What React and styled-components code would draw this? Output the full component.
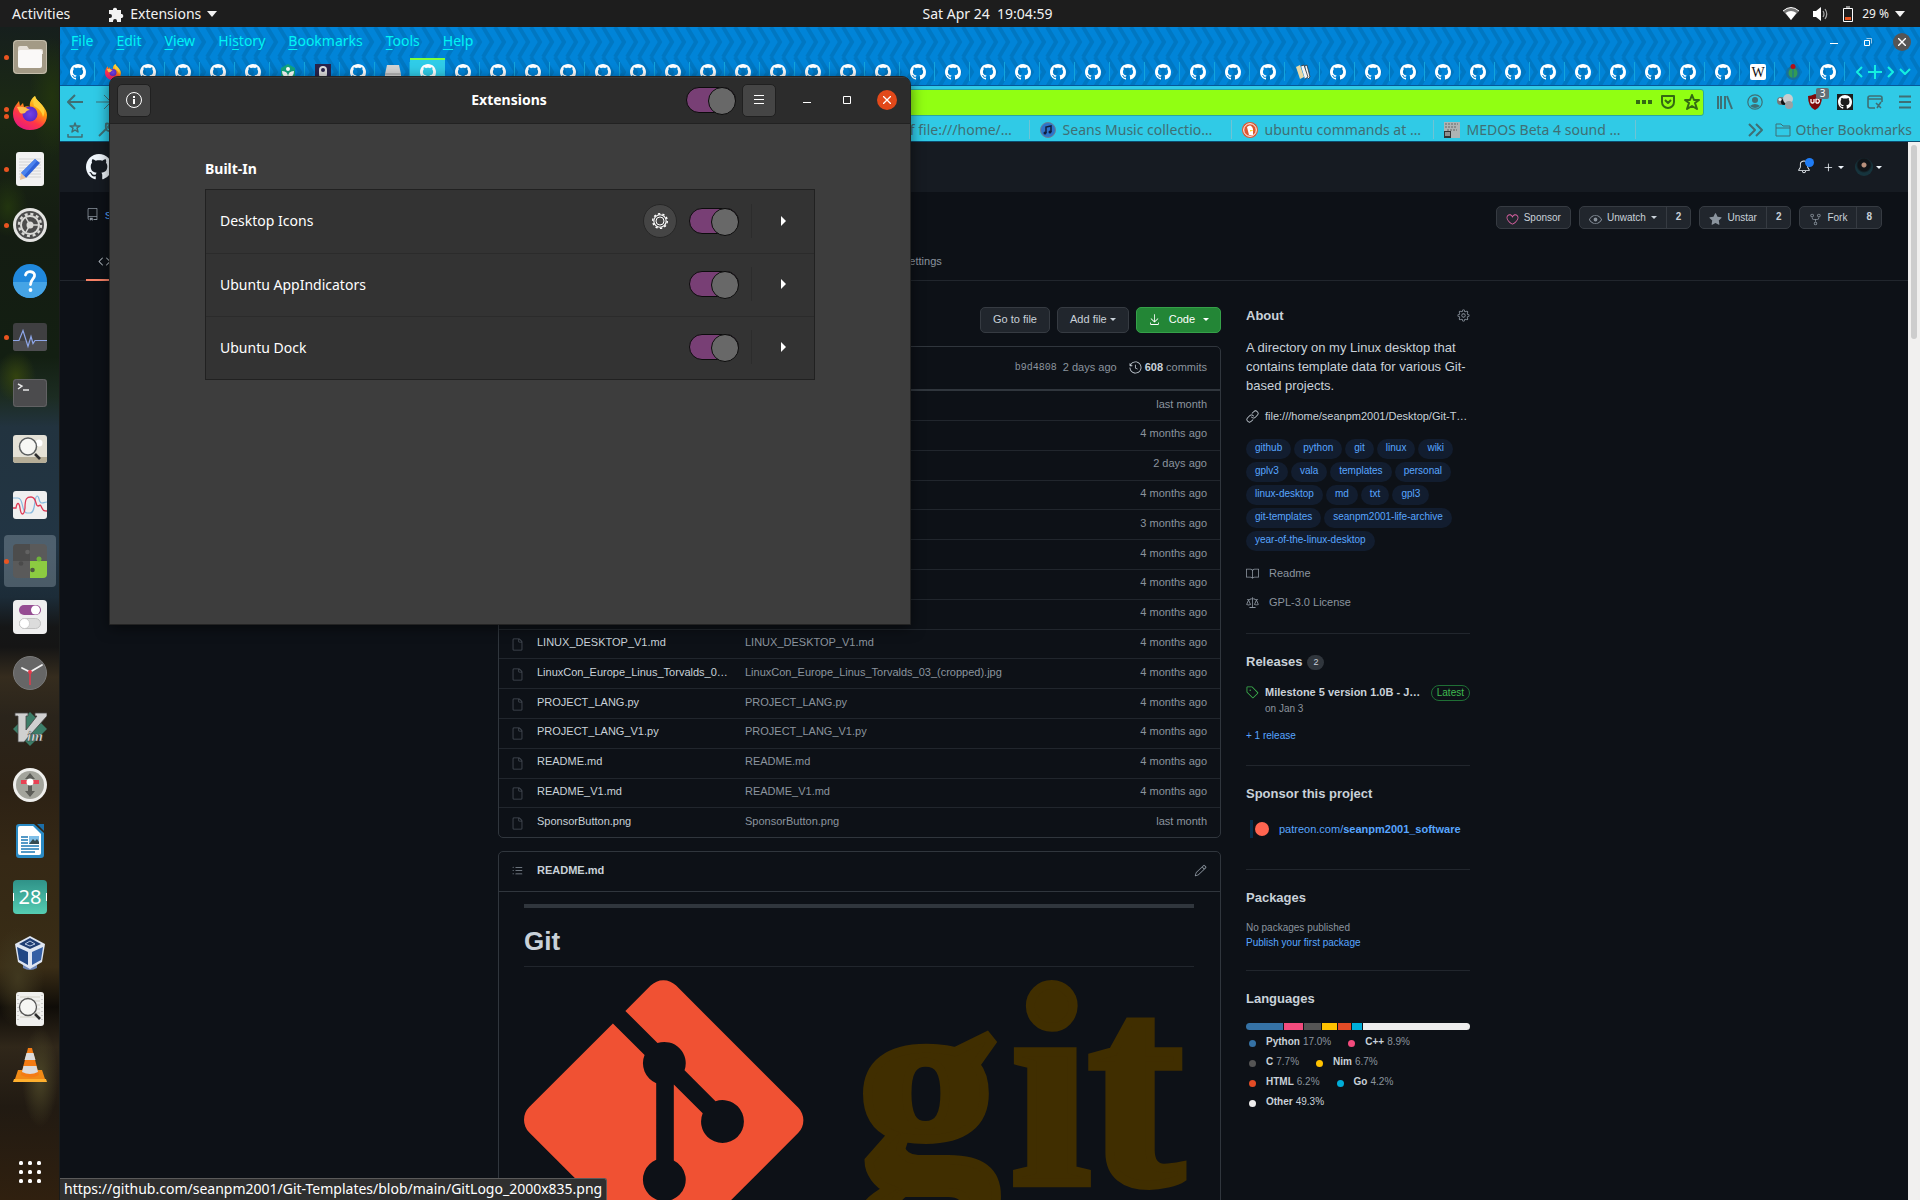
import React from "react";
import styled, { createGlobalStyle, css } from "styled-components";
import {
  GoBell, GoBook, GoCode, GoDownload, GoEye, GoFile, GoGear, GoHeart, GoHistory, GoLaw, GoLink,
  GoListUnordered, GoPencil, GoPlus, GoRepo, GoRepoForked, GoStarFill, GoTag,
} from "react-icons/go";

const shell = '"Noto Sans", "Open Sans", sans-serif';
const web = '"Liberation Sans", Arial, sans-serif';

const Global = createGlobalStyle`
  * { box-sizing: border-box; }
  html, body { margin: 0; height: 100%; }
  body { background: #0d1117; font-family: ${shell}; font-size: 14px; overflow: hidden; }
  a { color: inherit; text-decoration: none; }
  button { font: inherit; color: inherit; border: 0; background: none; padding: 0; cursor: pointer; }
  ul { list-style: none; margin: 0; padding: 0; }
  h1, h2, h3, p { margin: 0; }
  svg { display: block; flex: none; }
`;

const Desktop = styled.div`
  height: 100vh;
  display: flex;
  flex-direction: column;
  position: relative;
  overflow: hidden;
`;

/* ---------- top bar ---------- */
const TopBar = styled.header`
  flex: none;
  height: 27px;
  display: grid;
  grid-template-columns: 1fr auto 1fr;
  align-items: center;
  background: #1d1d1d;
  color: #f2f2f2;
  padding: 0 15px 0 12px;
`;
const BarGroup = styled.div`
  display: flex;
  align-items: center;
  justify-content: ${(p) => (p.$end ? "flex-end" : "flex-start")};
  gap: ${(p) => (p.$end ? "8px" : "38px")};
  & > svg + svg { margin-left: 6px; }
`;
const BarButton = styled.button`
  display: flex;
  align-items: center;
  gap: 6px;
  line-height: 24px;
`;
const Clock = styled.time`
  padding-left: 58px;
  white-space: pre;
  line-height: 24px;
`;
const Percent = styled.span`
  font-size: 12px;
`;
const Triangle = styled.i`
  border: 5px solid transparent;
  border-top: 6px solid currentColor;
  border-bottom: 0;
`;

const Main = styled.div`
  flex: 1;
  min-height: 0;
  display: flex;
`;

/* ---------- dock ---------- */
const DockBar = styled.nav`
  flex: none;
  width: 60px;
  display: flex;
  flex-direction: column;
  align-items: center;
  gap: 4px;
  padding: 4px 0 2px;
  border-right: 1px solid #1a1c1c;
  background:
    radial-gradient(ellipse 18px 50px at 40px 1050px, #4a4426 0, transparent 100%),
    radial-gradient(ellipse 26px 50px at 18px 950px, #40381f 0, transparent 100%),
    radial-gradient(ellipse 20px 26px at 16px 350px, #33430f 0, transparent 100%),
    radial-gradient(ellipse 20px 30px at 8px 180px, #22350f 0, transparent 100%),
    radial-gradient(ellipse 22px 60px at 52px 70px, #22340f 0, transparent 100%),
    linear-gradient(#161f1d 0, #1b2914 80px, #141c12 200px, #131f12 330px, #1c2c22 370px, #22333f 400px,
      #223544 520px, #1c2c38 570px, #151617 600px, #151515 620px, #352c1e 650px, #2a241b 690px, #2c2114 760px,
      #352815 830px, #362a15 880px, #3a2d16 940px, #0f0c08 980px, #30271a 1020px, #211a12 1080px, #30200f 1173px);
`;
const DockButton = styled.button`
  position: relative;
  width: 52px;
  height: 52px;
  flex: none;
  display: grid;
  place-items: center;
  border-radius: 4px;
  background: ${(p) => (p.$active ? "rgba(200,215,225,.27)" : "transparent")};
  margin-top: ${(p) => (p.$last ? "auto" : "0")};
`;
const Dots = styled.span`
  position: absolute;
  left: 0;
  top: 0;
  bottom: 0;
  display: flex;
  flex-direction: column;
  justify-content: center;
  gap: 2px;
`;
const Dot = styled.i`
  width: 5px;
  height: 5px;
  border-radius: 50%;
  background: #e95420;
`;

const Box = ({ children, s = 34 }) => <svg width={s} height={s} viewBox="0 0 34 34">{children}</svg>;

const Mark16 = ({ size = 16, ...rest }) => (
  <svg width={size} height={size} viewBox="0 0 16 16" fill="currentColor" {...rest}>
    <path d="M8 0C3.58 0 0 3.58 0 8c0 3.54 2.29 6.53 5.47 7.59.4.07.55-.17.55-.38 0-.19-.01-.82-.01-1.49-2.01.37-2.53-.49-2.69-.94-.09-.23-.48-.94-.82-1.13-.28-.15-.68-.52-.01-.53.63-.01 1.08.58 1.23.82.72 1.21 1.87.87 2.33.66.07-.52.28-.87.51-1.07-1.78-.2-3.64-.89-3.64-3.95 0-.87.31-1.59.82-2.15-.08-.2-.36-1.02.08-2.12 0 0 .67-.21 2.2.82.64-.18 1.32-.27 2-.27.68 0 1.36.09 2 .27 1.53-1.04 2.2-.82 2.2-.82.44 1.1.16 1.92.08 2.12.51.56.82 1.27.82 2.15 0 3.07-1.87 3.75-3.65 3.95.29.25.54.73.54 1.48 0 1.07-.01 1.93-.01 2.2 0 .21.15.46.55.38A8.013 8.013 0 0016 8c0-4.42-3.58-8-8-8z" />
  </svg>
);

const FirefoxArt = ({ s = 34 }) => (
  <svg width={s} height={s} viewBox="0 0 34 34">
    <defs>
      <linearGradient id="ffa" x1="0.8" y1="0" x2="0.2" y2="1">
        <stop offset="0" stopColor="#fff44f" /><stop offset=".35" stopColor="#ff980e" />
        <stop offset=".65" stopColor="#ff3647" /><stop offset="1" stopColor="#e31587" />
      </linearGradient>
      <radialGradient id="ffb"><stop offset="0" stopColor="#7542e5" /><stop offset="1" stopColor="#592acb" /></radialGradient>
    </defs>
    <path fill="url(#ffa)" d="M6 5l1 5 3-3 1 4c2-1 4-1 6 0-1-5 2-9 5-11 1 4 4 5 7 9 3 3 5 7 5 10 0 9-7 15-17 15S0 27 0 18C0 12 3 9 6 5z" />
    <circle cx="17" cy="18" r="7.5" fill="url(#ffb)" />
    <path fill="#ffbd4f" d="M4 11c4-1 9 0 13 3-2 0-4 1-5 3-3 1-5 1-6-2z" />
    <path fill="#ffcf3a" d="M22 0c1 4 4 5 7 9 3 4 3 8 1 12-1-6-5-9-9-11-1-3-1-7 1-10z" />
  </svg>
);

const dockItems = [
  { name: "Files", dots: 1, art: <Box><rect width="34" height="34" rx="4" fill="#a39a86" /><rect x=".5" y=".5" width="33" height="33" rx="4" fill="none" stroke="#c4bdac" /><path d="M5 8q0-2 2-2h7l2 3h12q2 0 2 2v3H5z" fill="#e6e0d8" /><rect x="5" y="10" width="24" height="18" rx="2" fill="#faf9f8" /></Box> },
  { name: "Firefox", dots: 2, art: <FirefoxArt /> },
  { name: "Text Editor", dots: 1, art: <Box><rect x="3" width="28" height="34" rx="3" fill="#f2f2f2" /><path d="M6 7h22M6 10h22M6 13h22M6 16h22M6 19h22M6 22h22M6 25h22" stroke="#d4d4d4" /><path d="M22 7l5 4-14 15-5-5z" fill="#2f62d8" /><path d="M22 7l2 2-13 15-3-3z" fill="#4c83ee" /><path d="M8 21l5 5-6 2z" fill="#e8c19a" /></Box> },
  { name: "Settings", dots: 1, art: <Box><circle cx="17" cy="17" r="17" fill="#e4e4e2" /><circle cx="17" cy="17" r="14" fill="#4c4c4c" /><circle cx="17" cy="17" r="9" fill="none" stroke="#d9d9d6" strokeWidth="2" /><circle cx="17" cy="17" r="11" fill="none" stroke="#d9d9d6" strokeWidth="2.4" strokeDasharray="3 2.76" /><circle cx="17" cy="17" r="3.5" fill="#d9d9d6" /><path d="M17 17h8M17 17l-4-7M17 17l-4 7" stroke="#d9d9d6" strokeWidth="1.5" /></Box> },
  { name: "Help", art: <Box><circle cx="17" cy="17" r="17" fill="#2088dc" /><path d="M0 18a17 16 0 0 0 34 0z" fill="#45a4e6" /><path d="M12.5 11c1-5 10-4 9 1-.5 3-4 4-4 8.5" fill="none" stroke="#fff" strokeWidth="2.8" strokeLinecap="round" /><circle cx="17.5" cy="26" r="1.9" fill="#fff" /></Box> },
  { name: "System Monitor", dots: 1, art: <Box><rect y="3" width="34" height="28" rx="3" fill="#3f3f41" /><path d="M0 21h34v7q0 3-3 3H3q-3 0-3-3z" fill="#4d4d50" /><path d="M0 20.5h6l4-10 5 16 3-10 2 7 2-3h12" fill="none" stroke="#8ea6e8" strokeWidth="1.2" /></Box> },
  { name: "Terminal", art: <Box><rect y="3" width="34" height="28" rx="3" fill="#4b4b4d" /><rect x=".5" y="3.5" width="33" height="27" rx="3" fill="none" stroke="#626264" /><path d="M5 8l4 2-4 3M10 14h6" fill="none" stroke="#e8e8e8" strokeWidth="1.4" /></Box> },
  { name: "Image Viewer", art: <Box><rect y="3" width="34" height="28" rx="3" fill="#e4e1d6" /><path d="M0 25h34v3q0 3-3 3H3q-3 0-3-3z" fill="#b5ad97" /><circle cx="26" cy="11" r="3.5" fill="#fff" /><circle cx="15" cy="14.500" r="8.5" fill="#f7f7f4" stroke="#5c5f60" strokeWidth="1.5" /><path d="M22 22l5 5" stroke="#2d2d2d" strokeWidth="2.6" /></Box> },
  { name: "Power Statistics", art: <Box><rect y="3" width="34" height="28" rx="3" fill="#efefef" /><path d="M0 10h5c6 0 3 15 9 15h3c6 0 4-17 7-17 3 0 1 7 5 7 2 0 2-1 5-1" fill="none" stroke="#87b9de" strokeWidth="1.2" /><path d="M0 20h3c1-6 3-6 4 0 1 8 4 8 5 0 0-10 2-11 6-11 6 0 4 9 7 9 2 0 2-2 3 0 2 5 3 5 6 5" fill="none" stroke="#dd3a55" strokeWidth="1.3" /></Box> },
  { name: "Extensions", dots: 1, active: true, art: <Box><rect width="34" height="34" rx="4" fill="#5a5a5a" /><path d="M0 17V4q0-4 4-4h13v17z" fill="#4c4c4c" /><path d="M17 17h17v13q0 4-4 4H17z" fill="#8ccb41" /><circle cx="26" cy="15" r="2.5" fill="#6fb33b" /><circle cx="14.5" cy="8" r="2.3" fill="#626262" /><circle cx="8" cy="19.5" r="2.3" fill="#4a4a4a" /><circle cx="19.5" cy="26" r="2.3" fill="#4d5a40" /></Box> },
  { name: "Tweaks", art: <Box><rect width="34" height="34" rx="4" fill="#efefef" /><rect x="6" y="5" width="22" height="10" rx="5" fill="#954c92" /><circle cx="22.5" cy="10" r="4.5" fill="#fff" /><rect x="6.5" y="18.5" width="21" height="10" rx="5" fill="#dcdcdc" stroke="#c2c2c2" /><circle cx="11.5" cy="23.5" r="5" fill="#fff" stroke="#bbb" strokeWidth=".6" /></Box> },
  { name: "Clocks", art: <Box><circle cx="17" cy="17" r="16.5" fill="#666" stroke="#7a7a7a" /><path d="M17 16L9 12M17 16l12-7" stroke="#f2f2f2" strokeWidth="1.8" strokeLinecap="round" /><path d="M17 14v15" stroke="#e33b4c" strokeWidth="1.5" /><circle cx="17" cy="16" r="2" fill="#e33b4c" /></Box> },
  { name: "Vim", art: <Box><path d="M17 0l17 17-17 17L0 17z" fill="#3c7d68" /><path d="M2 1h13v3h-2v14L24 4h-2V1h12v3L11 30H5V4H2z" fill="#d0d0d0" stroke="#444" strokeWidth=".8" /><text x="14" y="29" fontFamily="Liberation Serif" fontSize="15" fontStyle="italic" fontWeight="700" fill="#e2e2e2" stroke="#333" strokeWidth=".4">im</text></Box> },
  { name: "Startup Disk", art: <Box><circle cx="17" cy="17" r="17" fill="#efefed" /><circle cx="17" cy="17" r="14" fill="#a3a49c" /><path d="M17 5l5 6h-3v12h3l-5 6-5-6h3V11h-3z" fill="#5c5d58" /><rect x="8" y="12" width="18" height="4" fill="#e84154" /><circle cx="17" cy="14" r="3.5" fill="#fff" /></Box> },
  { name: "Writer", art: <Box><path d="M6 0h15l10 9v22q0 3-3 3H6q-3 0-3-3V3q0-3 3-3z" fill="#2a8ac4" /><path d="M7 2h13l8 8v19q0 2-2 2H7q-2 0-2-2V4q0-2 2-2z" fill="#fff" /><path d="M24 0h7v7z" fill="#1b6ea8" /><path d="M8 13h7M8 16h7M8 19h7M8 22h18M8 25h18M8 28h14" stroke="#1d78b4" strokeWidth="1.5" /><rect x="16" y="12" width="10" height="8" fill="#7fbfe8" /><path d="M16 20l4-5 2 2 2-2 2 3v2z" fill="#364b52" /></Box> },
  { name: "Calendar", art: <Box><defs><linearGradient id="cal" x2="0" y2="1"><stop offset="0" stopColor="#2f9288" /><stop offset="1" stopColor="#55cdb2" /></linearGradient></defs><rect width="34" height="34" rx="4" fill="url(#cal)" /><text x="17" y="24" textAnchor="middle" fontFamily="Noto Sans" fontSize="20" fill="#fff">28</text><path d="M.5 13v8M33.5 13v8" stroke="#fff" /></Box> },
  { name: "VirtualBox", art: <Box><path d="M10 28l7 3 7-3v4q-7 4-14 0z" fill="#6e87b8" /><path d="M17 0l15 8-3 18-12 7L5 26 2 8z" fill="#dfe6f2" /><path d="M17 2l11 6-11 5L6 8z" fill="#1f3d73" /><path d="M4 11l11 5v13l-9-5z" fill="#214784" /><path d="M30 11l-11 5v13l9-5z" fill="#345fa5" /><path d="M12 8l5-3 5 3-5 2z" fill="none" stroke="#b9c8e2" /></Box> },
  { name: "Log Viewer", art: <Box><rect x="3" width="28" height="34" rx="3" fill="#f0f0ee" /><path d="M7 5h20M7 9h20M7 13h20M7 17h20M7 21h20M7 25h20" stroke="#d2d0c6" /><path d="M5 3v28M29 3v28" stroke="#aaa" strokeDasharray="1 3" /><circle cx="15" cy="15" r="8.5" fill="#f6f6f3" stroke="#555" strokeWidth="1.3" /><path d="M22 22l5 5" stroke="#2d2d2d" strokeWidth="2.6" /></Box> },
  { name: "VLC", art: <Box><path d="M5 22h24l4 12H1z" fill="#f08a16" /><path d="M15 0h4l7 27q-9 5-18 0z" fill="#f47c14" /><path d="M13.5 5h7l2 7h-11zM10.500 18h13l1.5 6q-8 4-16 0z" fill="#dcdcdc" /><path d="M1 31h32l1 3H0z" fill="#ffb02e" /></Box> },
];

function Dock() {
  return (
    <DockBar aria-label="Dock">
      {dockItems.map((d) => (
        <DockButton key={d.name} aria-label={d.name} $active={d.active}>
          {d.art}
          {d.dots && <Dots>{Array.from({ length: d.dots }, (_, i) => <Dot key={i} />)}</Dots>}
        </DockButton>
      ))}
      <DockButton aria-label="Show applications" $last>
        <svg width="24" height="24" viewBox="0 0 24 24" fill="#fff">
          {[1, 10, 19].flatMap((y) => [1, 10, 19].map((x) => <rect key={x + "-" + y} x={x} y={y} width="4" height="4" rx="1.5" />))}
        </svg>
      </DockButton>
    </DockBar>
  );
}

/* ---------- browser chrome ---------- */
const Browser = styled.section`
  flex: 1;
  min-width: 0;
  display: flex;
  flex-direction: column;
  position: relative;
`;
const chevrons =
  "url(\"data:image/svg+xml,%3Csvg xmlns='http://www.w3.org/2000/svg' width='12' height='30'%3E%3Cpath d='M-9 0L0 15L-9 30M3 0L12 15L3 30M15 0L24 15L15 30' fill='none' stroke='%230077c2' stroke-width='4'/%3E%3C/svg%3E\")";
const Strip = styled.div`
  flex: none;
  background: #0084d8 ${chevrons};
  border-bottom: 1px solid #05579a;
`;
const MenuRow = styled.div`
  height: 31px;
  display: flex;
  align-items: center;
  padding: 0 9px 2px 11px;
`;
const MenuItems = styled.nav`
  flex: 1;
  display: flex;
  gap: 23px;
  padding-bottom: 2px;
  color: #00f4f4;
  button { line-height: 20px; }
  u { text-underline-offset: 3px; }
`;
const WindowButton = styled.button`
  width: 34px;
  height: 20px;
  display: grid;
  place-items: center;
  &:last-child { width: 18px; height: 18px; margin-left: 8px; border-radius: 50%; background: #555; }
`;
const TabRow = styled.div`
  height: 27px;
  display: flex;
`;
const TabButton = styled.button`
  width: 35px;
  flex: none;
  display: grid;
  place-items: center;
  color: #fff;
  position: relative;
  ${(p) => p.$active
    ? css`background: #30cce8; box-shadow: inset 0 2px #7dff3c;`
    : css`&::after { content: ""; position: absolute; right: 0; top: 4px; height: 19px; width: 1px; background: #12a4dc; }`}
`;
const TabTools = styled.div`
  flex: 1;
  display: flex;
  align-items: center;
  justify-content: space-between;
  padding: 0 9px 0 11px;
  color: #14efe0;
`;
const ToolArea = styled.div`
  flex: none;
  background: #30cae6;
  color: #3f6f74;
  border-bottom: 1px solid #0b4c70;
`;
const NavRow = styled.div`
  height: 32px;
  display: flex;
  align-items: center;
  padding-left: 7px;
`;
const NavIcons = styled.div`
  display: flex;
  gap: 13px;
  padding-right: 25px;
`;
const UrlBox = styled.div`
  flex: 1;
  height: 27px;
  margin-right: 6px;
  display: flex;
  align-items: center;
  gap: 8px;
  padding: 0 3px;
  background: #91ff12;
  border: 1px solid #2aa7a0;
  border-radius: 3px;
  color: #336a12;
`;
const UrlInput = styled.input`
  flex: 1;
  min-width: 0;
  border: 0;
  outline: 0;
  background: none;
  font: inherit;
`;
const ToolButton = styled.button`
  width: 30px;
  height: 28px;
  display: grid;
  place-items: center;
  position: relative;
`;
const Badge = styled.span`
  position: absolute;
  right: 1px;
  top: 0;
  width: 13px;
  background: #636f76;
  color: #fff;
  font-size: 10px;
  line-height: 11px;
  border-radius: 2px;
`;
const MarkRow = styled.div`
  height: 23px;
  display: flex;
  align-items: center;
  padding: 0 8px 0 7px;
`;
const Marks = styled.ul`
  flex: 1;
  display: flex;
  justify-content: flex-end;
  padding-right: 112px;
`;
const Mark = styled.li`
  width: 202px;
  flex: none;
  padding-left: 10px;
  border-right: 1px solid #6fc3d4;
  a { display: flex; align-items: center; gap: 7px; line-height: 19px; white-space: nowrap; }
`;
const OtherMarks = styled.button`
  display: flex;
  align-items: center;
  gap: 5px;
  margin-left: 11px;
  line-height: 19px;
`;

const Line = ({ d, w = 16, h = 16, sw = 2, fill = "none" }) => (
  <svg width={w} height={h} viewBox={`0 0 ${w} ${h}`} fill={fill} stroke="currentColor" strokeWidth={sw} strokeLinejoin="round"><path d={d} /></svg>
);
const WordW = () => (
  <svg width="16" height="16" viewBox="0 0 16 16"><rect width="16" height="16" rx="2" fill="#fff" /><text x="8" y="13" textAnchor="middle" fontFamily="Liberation Serif" fontSize="14" fill="#111">W</text></svg>
);
const specialTabs = {
  1: <FirefoxArt s={16} />,
  6: <svg width="16" height="16" viewBox="0 0 16 16"><path d="M8 0l7 4v8l-7 4-7-4V4z" fill="#12a37d" /><circle cx="8" cy="5" r="2" fill="#fff" /><path d="M2 7q6 0 6 6 0-6 6-6 0 6-6 7-6-1-6-7z" fill="#fff" /></svg>,
  7: <svg width="16" height="16" viewBox="0 0 16 16"><rect width="16" height="16" fill="#29234b" /><rect x="4" y="2" width="8" height="12" rx="4" fill="#ddd" /><circle cx="8" cy="6" r="2" fill="#29234b" /></svg>,
  9: <svg width="16" height="16" viewBox="0 0 16 16"><path d="M2 1h12l2 9v6H0v-6z" fill="#d4d4d4" /><path d="M0 10h16" stroke="#999" /></svg>,
  35: <svg width="16" height="16" viewBox="0 0 16 16"><path d="M1 3l4-2 4 12-4 2z" fill="#e8d9a6" /><path d="M6 2l3-1 4 12-3 2M10 2l2-1 3 12-2 2" fill="#f4f4f4" stroke="#333" strokeWidth=".8" /></svg>,
  48: <WordW />,
  49: <svg width="16" height="16" viewBox="0 0 16 16"><circle cx="8" cy="9" r="7" fill="#176f9c" /><ellipse cx="8" cy="9" rx="4.5" ry="5" fill="#339a55" /><path d="M8 5v9" stroke="#176f9c" /><circle cx="8" cy="2.5" r="2.5" fill="#b01018" /></svg>,
};
const markItems = [
  ["Index of file:///home/…", <Line w={16} d="M2 1h8l4 4v10H2z" sw={1.4} />],
  ["Seans Music collectio…", <svg width="16" height="16" viewBox="0 0 16 16"><circle cx="8" cy="8" r="7.5" fill="#2d73c9" stroke="#6a7e93" /><path d="M6 11V5l5-1v6" fill="none" stroke="#111c3a" strokeWidth="1.5" /><circle cx="5" cy="11" r="1.5" fill="#111c3a" /><circle cx="10" cy="10" r="1.5" fill="#111c3a" /></svg>],
  ["ubuntu commands at …", <svg width="16" height="16" viewBox="0 0 16 16"><circle cx="8" cy="8" r="8" fill="#de5833" /><circle cx="8" cy="8" r="6.3" fill="none" stroke="#fff" /><path d="M5 5q4-4 6 2v6H7z" fill="#fff" /><path d="M8 8l4 .5-4 1z" fill="#fdd20a" /></svg>],
  ["MEDOS Beta 4 sound …", <svg width="16" height="16" viewBox="0 0 16 16"><rect width="16" height="16" fill="#aeb4b4" /><path d="M1 2h13M1 5h11M3 8h10" stroke="#666" strokeDasharray="2 1" /><rect y="9" width="7" height="7" fill="#333" /><path d="M1 11h5M1 13h5" stroke="#eee" /></svg>],
];

function Chrome() {
  return (
    <>
      <Strip>
        <MenuRow>
          <MenuItems>
            <button><u>F</u>ile</button><button><u>E</u>dit</button><button><u>V</u>iew</button>
            <button>Hi<u>s</u>tory</button><button><u>B</u>ookmarks</button><button><u>T</u>ools</button><button><u>H</u>elp</button>
          </MenuItems>
          <WindowButton aria-label="Minimize"><svg width="8" height="8"><path d="M0 5.5h8" stroke="#fff" /></svg></WindowButton>
          <WindowButton aria-label="Restore"><svg width="8" height="8" fill="none" stroke="#fff"><path d="M.5 2.5h5v5h-5z" /><path d="M2.5.5h5v5" opacity=".6" /></svg></WindowButton>
          <WindowButton aria-label="Close"><svg width="8" height="8" stroke="#fff" strokeWidth="1.4"><path d="M0 0l8 8M8 0L0 8" /></svg></WindowButton>
        </MenuRow>
        <TabRow>
          {Array.from({ length: 51 }, (_, i) => (
            <TabButton key={i} aria-label={`Tab ${i + 1}`} $active={i === 10}>{specialTabs[i] || <Mark16 />}</TabButton>
          ))}
          <TabTools>
            <button aria-label="Scroll tabs left"><Line d="M6 1L1 6l5 5" w={7} h={12} /></button>
            <button aria-label="New tab"><Line d="M7 0v14M0 7h14" w={14} h={14} /></button>
            <button aria-label="Scroll tabs right"><Line d="M1 1l5 5-5 5" w={7} h={12} /></button>
            <button aria-label="List all tabs"><Line d="M1 1l5 5 5-5" w={12} h={7} /></button>
          </TabTools>
        </TabRow>
      </Strip>
      <ToolArea>
        <NavRow>
          <NavIcons>
            <button aria-label="Back"><Line d="M16 8H1M8 1L1 8l7 7" /></button>
            <button aria-label="Forward"><Line d="M0 8h15M8 1l7 7-7 7" sw={1} /></button>
          </NavIcons>
          <UrlBox>
            <UrlInput aria-label="Address" />
            <Line d="M0 8h4M6 8h4M12 8h4" sw={4} />
            <Line d="M2 2h12v6a6 6 0 0 1-12 0zM5 6l3 3 3-3" />
            <Line d="M8 1l2 5h5l-4 3 2 6-5-3-5 3 2-6-4-3h5z" />
          </UrlBox>
          <ToolButton aria-label="Library"><Line d="M1 2v13M4 2v13M8 2v13M10 2l5 13" /></ToolButton>
          <ToolButton aria-label="Account"><svg width="16" height="16" viewBox="0 0 16 16"><circle cx="8" cy="8" r="7.2" fill="none" stroke="currentColor" strokeWidth="1.2" /><circle cx="8" cy="6" r="3" fill="currentColor" /><path d="M3 12q5-4 10 0-5 4-10 0z" fill="currentColor" /></svg></ToolButton>
          <ToolButton aria-label="Molecule"><svg width="16" height="16" viewBox="0 0 16 16"><circle cx="4" cy="7" r="4" fill="#777" /><circle cx="7" cy="8" r="3" fill="#111" /><circle cx="11" cy="5" r="5" fill="#c9ced0" /><circle cx="12" cy="11" r="4" fill="#9aa0a3" /><circle cx="3" cy="5.5" r="1.5" fill="#eee" /></svg></ToolButton>
          <ToolButton aria-label="Content blocker"><svg width="16" height="18" viewBox="0 0 16 18"><path d="M8 1q4 2 7 2 0 11-7 14Q1 14 1 3q3 0 7-2z" fill="#800a0a" /><path d="M4 6v3q0 1 1.5 1T7 9V6M9 6.5v3a2 2 0 1 0 .1-3z" fill="none" stroke="#fff" strokeWidth="1.3" /></svg><Badge>3</Badge></ToolButton>
          <ToolButton aria-label="GitHub"><svg width="16" height="16" viewBox="0 0 16 16"><rect width="16" height="16" fill="#1c1c1c" /><Mark16 x="1" y="1" size={14} color="#fff" /></svg></ToolButton>
          <ToolButton aria-label="Page tools"><Line d="M15 8V4q0-2-2-2H3Q1 2 1 4v8q0 2 2 2h5M1 5h14M9 9l5 5M14 8l-4 6" sw={1.6} /></ToolButton>
          <ToolButton aria-label="Menu"><Line d="M2 2.5h12M2 8h12M2 13.5h12" /></ToolButton>
        </NavRow>
        <MarkRow>
          <NavIcons>
            <Line d="M8 1l1 3h4l-3 2 1 4-3-2-3 2 1-4-3-2h4zM1 12v3h14v-3" w={17} sw={1.5} />
            <Line d="M2 14l8-8M9 2q0-1 4 0l-2 3 2 2 2-3q1 5-3 5-4 0-3-7z" sw={1.8} />
          </NavIcons>
          <Marks>
            {markItems.map(([label, icon]) => (
              <Mark key={label}><a href="#bookmark">{icon}<span>{label}</span></a></Mark>
            ))}
          </Marks>
          <button aria-label="More bookmarks"><Line d="M1 2l6 6-6 6M8 2l6 6-6 6" /></button>
          <OtherMarks><Line d="M1 4V2h5l2 2h7v10H1zM1 6h14" sw={1} />Other Bookmarks</OtherMarks>
        </MarkRow>
      </ToolArea>
    </>
  );
}

/* ---------- GitHub page ---------- */
const Viewport = styled.div`
  flex: 1;
  min-height: 0;
  display: flex;
  font-family: ${web};
  font-size: 11px;
  line-height: 17px;
  color: #c9d1d9;
`;
const Page = styled.div`
  flex: 1;
  min-width: 0;
  overflow: hidden;
  background: #0d1117;
`;
const ScrollTrack = styled.div`
  flex: none;
  width: 12px;
  padding: 3px;
  background: #f1f0ef;
`;
const ScrollThumb = styled.div`
  height: 194px;
  border-radius: 3px;
  background: #cdcdcd;
`;
const SiteHeader = styled.header`
  height: 50px;
  display: flex;
  align-items: center;
  gap: 11px;
  padding: 0 26px;
  background: #161b22;
  color: #f0f6fc;
`;
const Grow = styled.span`
  flex: 1;
`;
const HeaderButton = styled.button`
  display: flex;
  align-items: center;
  gap: 3px;
  position: relative;
`;
const Unread = styled.i`
  position: absolute;
  right: -3px;
  top: -2px;
  width: 9px;
  height: 9px;
  border-radius: 50%;
  background: #1f7cf5;
`;
const Caret = styled.i`
  border: 3px solid transparent;
  border-top: 3px solid currentColor;
  border-bottom: 0;
`;
const Avatar = styled.span`
  width: 18px;
  height: 18px;
  border-radius: 50%;
  background: radial-gradient(circle at 9px 7px, #b9907c 0 2px, #101418 3px 6px, #16343d 8px);
`;
const RepoBar = styled.div`
  display: flex;
  align-items: flex-start;
  gap: 8px;
  padding: 14px 26px 0;
  height: 54px;
`;
const RepoName = styled.a`
  display: flex;
  align-items: center;
  gap: 6px;
  flex: 1;
  font-size: 13px;
  color: #58a6ff;
  svg { color: #8b949e; }
`;
const Split = styled.div`
  display: flex;
  height: 23px;
  border: 1px solid #363b42;
  border-radius: 5px;
  background: #21262d;
  font-size: 10px;
  line-height: 19px;
  button { display: flex; align-items: center; gap: 5px; padding: 0 9px; }
  button svg { color: ${(p) => (p.$pink ? "#db61a2" : "#8b949e")}; margin-top: 3px; }
  a { padding: 0 9px; font-weight: 700; border-left: 1px solid #363b42; }
`;
const RepoTabs = styled.nav`
  height: 35px;
  display: flex;
  gap: 736px;
  padding: 0 26px;
  border-bottom: 1px solid #21262d;
`;
const RepoTab = styled.a`
  display: flex;
  align-items: center;
  gap: 7px;
  height: 35px;
  padding: 0 0 3px ${(p) => (p.$on ? "12px" : "0")};
  width: ${(p) => (p.$on ? "80px" : "auto")};
  color: ${(p) => (p.$on ? "#c9d1d9" : "#8b949e")};
  border-bottom: 2px solid ${(p) => (p.$on ? "#f78166" : "transparent")};
`;
const Columns = styled.div`
  display: grid;
  grid-template-columns: minmax(0, 1fr) 224px;
  gap: 25px;
  max-width: 972px;
  margin: 26px auto 0;
`;
const Actions = styled.div`
  display: flex;
  justify-content: flex-end;
  gap: 7px;
  margin-bottom: 13px;
`;
const ActionButton = styled.button`
  display: flex;
  align-items: center;
  gap: ${(p) => (p.$green ? "8px" : "3px")};
  height: 26px;
  padding: 0 ${(p) => (p.$green ? "11px" : "12px")} 2px;
  border-radius: 5px;
  border: 1px solid ${(p) => (p.$green ? "#35a149" : "#363b42")};
  background: ${(p) => (p.$green ? "#238636" : "#21262d")};
  color: ${(p) => (p.$green ? "#fff" : "#c9d1d9")};
`;
const Panel = styled.section`
  border: 1px solid #30363d;
  border-radius: 5px;
  margin-bottom: 13px;
`;
const PanelHead = styled.div`
  display: flex;
  align-items: center;
  gap: 6px;
  height: ${(p) => (p.$commits ? "42px" : "40px")};
  padding: 0 13px 2px 12px;
  color: #8b949e;
  border-bottom: ${(p) => (p.$commits ? 0 : "1px")} solid #30363d;
  b, h2 { color: #c9d1d9; font-size: 11px; }
`;
const PanelTitle = styled.h2`
  flex: 1;
  padding-left: 7px;
`;
const Hash = styled.a`
  font-family: "Liberation Mono", monospace;
  font-size: 10px;
`;
const CommitCount = styled.a`
  display: flex;
  align-items: center;
  gap: 3px;
  padding-left: 6px;
  svg { color: #c9d1d9; }
`;
const Files = styled.table`
  width: 100%;
  height: 448px;
  border-collapse: collapse;
  table-layout: fixed;
  td {
    padding: 0 0 3px;
    border-top: 1px solid #21262d;
    color: #8b949e;
    white-space: nowrap;
  }
  tr:first-child td { border-top: 2px solid #30363d; }
  td:nth-child(1) { width: 38px; padding: 1px 0 0 12px; color: #484f58; }
  td:nth-child(2) { width: 208px; color: #c9d1d9; }
  td:nth-child(4) { width: 100px; padding-right: 13px; text-align: right; }
`;
const Readme = styled.div`
  padding: 12px 26px 12px 25px;
`;
const Rule = styled.div`
  height: 4px;
  background: #30363d;
  margin-bottom: 17px;
`;
const Title = styled.h1`
  font-size: 26px;
  line-height: 32px;
  padding-bottom: 9px;
  border-bottom: 1px solid #21262d;
  margin-bottom: 13px;
`;
const LogoArt = styled.svg`
  width: 100%;
  height: auto;
`;

const Block = styled.section`
  padding-bottom: ${(p) => p.$pb || 22}px;
  margin-bottom: 19px;
  border-bottom: ${(p) => (p.$last ? 0 : "1px")} solid #21262d;
`;
const Heading = styled.h2`
  display: flex;
  align-items: center;
  justify-content: ${(p) => (p.$spread ? "space-between" : "flex-start")};
  gap: 5px;
  font-size: 13px;
  line-height: 17px;
  margin-bottom: ${(p) => p.$mb || 14}px;
  svg { color: #8b949e; }
`;
const Counter = styled.span`
  min-width: 17px;
  padding: 0 5px;
  margin-top: 2px;
  border-radius: 9px;
  background: #30363d;
  font-size: 9px;
  font-weight: 400;
  line-height: 15px;
  text-align: center;
`;
const About = styled.p`
  font-size: 13px;
  line-height: 19px;
  margin-bottom: 13px;
`;
const Website = styled.a`
  display: flex;
  align-items: center;
  gap: 6px;
  margin-bottom: 14px;
  white-space: nowrap;
`;
const Tags = styled.div`
  display: flex;
  flex-wrap: wrap;
  gap: 3px;
  margin-bottom: 14px;
`;
const Tag = styled.a`
  height: 20px;
  padding: 0 9px;
  border-radius: 10px;
  background: #121d2f;
  color: #58a6ff;
  font-size: 10px;
  line-height: 18px;
`;
const Meta = styled.a`
  display: flex;
  align-items: center;
  gap: 10px;
  color: #8b949e;
  & + & { margin-top: 12px; }
`;
const Release = styled.div`
  display: grid;
  grid-template-columns: 13px minmax(0, 1fr) auto;
  align-items: center;
  column-gap: 6px;
  margin-bottom: 12px;
  b { white-space: nowrap; }
  svg { color: #3fb950; }
`;
const Latest = styled.span`
  padding: 0 5px;
  border: 1px solid #1f6f35;
  border-radius: 9px;
  color: #3fb950;
  font-size: 10px;
  line-height: 14px;
`;
const Small = styled.p`
  grid-column: 2;
  font-size: 10px;
  line-height: 15px;
  color: #8b949e;
`;
const BlueLink = styled.a`
  display: block;
  color: #58a6ff;
  font-size: ${(p) => (p.$big ? 11 : 10)}px;
  line-height: 15px;
`;
const Patron = styled.div`
  display: flex;
  align-items: center;
  padding: 2px 4px;
  gap: 2px;
  a { padding-left: 8px; }
`;
const PatreonMark = styled.i`
  width: 14px;
  height: 14px;
  border-radius: 50%;
  background: #ff6550;
`;
const PatreonBar = styled.i`
  width: 3px;
  height: 18px;
  background: #052d49;
`;
const Bar = styled.div`
  display: flex;
  gap: 1px;
  height: 7px;
  border-radius: 4px;
  overflow: hidden;
  margin-bottom: 4px;
`;
const Part = styled.span`
  flex: ${(p) => p.$n} 0 0;
  background: ${(p) => p.$c};
`;
const Langs = styled.ul`
  display: flex;
  flex-wrap: wrap;
  row-gap: 4px;
`;
const Lang = styled.li`
  display: flex;
  align-items: center;
  gap: 3px;
  padding-left: 3px;
  margin-right: 14px;
  font-size: 10px;
  line-height: 16px;
  color: ${(p) => (p.$other ? "#c9d1d9" : "#8b949e")};
  b { color: #c9d1d9; }
  i { width: 7px; height: 7px; border-radius: 50%; margin: 3px 7px 0 0; background: ${(p) => p.$c}; }
`;

const files = [
  ["", "last month"], ["", "4 months ago"], ["", "2 days ago"], ["", "4 months ago"], ["", "3 months ago"],
  ["", "4 months ago"], ["", "4 months ago"], ["", "4 months ago"],
  ["LINUX_DESKTOP_V1.md", "4 months ago"],
  ["LinuxCon_Europe_Linus_Torvalds_03_(cropped).jpg", "4 months ago", "LinuxCon_Europe_Linus_Torvalds_0…"],
  ["PROJECT_LANG.py", "4 months ago"], ["PROJECT_LANG_V1.py", "4 months ago"], ["README.md", "4 months ago"],
  ["README_V1.md", "4 months ago"], ["SponsorButton.png", "last month"],
];
const tags = ["github", "python", "git", "linux", "wiki", "gplv3", "vala", "templates", "personal", "linux-desktop",
  "md", "txt", "gpl3", "git-templates", "seanpm2001-life-archive", "year-of-the-linux-desktop"];
const langs = [["Python", 17.0, "#3572a5"], ["C++", 8.9, "#f34b7d"], ["C", 7.7, "#555555"], ["Nim", 6.7, "#ffc200"],
  ["HTML", 6.2, "#e34c26"], ["Go", 4.2, "#00add8"], ["Other", 49.3, "#ededed"]];

function GitLogo() {
  return (
    <LogoArt viewBox="0 0 671 280" role="img" aria-label="git">
      <path transform="scale(3.045)" fill="#f05133" d="M90.156 41.965L50.036 1.848a5.918 5.918 0 0 0-8.372 0l-8.328 8.332 10.566 10.566a7.03 7.03 0 0 1 7.23 1.684 7.034 7.034 0 0 1 1.669 7.277l10.187 10.184a7.028 7.028 0 0 1 7.278 1.672 7.04 7.04 0 0 1 0 9.957 7.05 7.05 0 0 1-9.965 0 7.044 7.044 0 0 1-1.528-7.66l-9.5-9.497V59.36a7.04 7.04 0 0 1 1.86 11.29 7.04 7.04 0 0 1-9.957 0 7.04 7.04 0 0 1 0-9.958 7.06 7.06 0 0 1 2.304-1.539V33.926a7.049 7.049 0 0 1-3.82-9.234L29.242 14.272 1.73 41.777a5.925 5.925 0 0 0 0 8.371L41.852 90.27a5.925 5.925 0 0 0 8.37 0l39.934-39.934a5.925 5.925 0 0 0 0-8.371" />
      <text x="333 488 565" y="203" fontFamily="Liberation Serif, serif" fontWeight="700" fontSize="286" fill="#402e00" stroke="#402e00" strokeWidth="9">git</text>
    </LogoArt>
  );
}

function GitHubPage() {
  return (
    <Viewport>
      <Page>
        <SiteHeader>
          <a href="#home" aria-label="Homepage"><Mark16 size={26} /></a>
          <Grow />
          <HeaderButton aria-label="Notifications"><GoBell size={14} /><Unread /></HeaderButton>
          <HeaderButton aria-label="Create new"><GoPlus size={13} /><Caret /></HeaderButton>
          <HeaderButton aria-label="Profile"><Avatar /><Caret /></HeaderButton>
        </SiteHeader>
        <RepoBar>
          <RepoName href="#owner"><GoRepo size={13} />seanpm2001</RepoName>
          <Split $pink><button><GoHeart size={13} />Sponsor</button></Split>
          <Split><button><GoEye size={13} />Unwatch <Caret /></button><a href="#watchers">2</a></Split>
          <Split><button><GoStarFill size={13} />Unstar</button><a href="#stars">2</a></Split>
          <Split><button><GoRepoForked size={13} />Fork</button><a href="#forks">8</a></Split>
        </RepoBar>
        <RepoTabs>
          <RepoTab href="#code" $on><GoCode size={13} />Code</RepoTab>
          <RepoTab href="#settings">Settings</RepoTab>
        </RepoTabs>
        <Columns>
          <main>
            <Actions>
              <ActionButton>Go to file</ActionButton>
              <ActionButton>Add file <Caret /></ActionButton>
              <ActionButton $green><GoDownload size={13} />Code <Caret /></ActionButton>
            </Actions>
            <Panel>
              <PanelHead $commits>
                <Grow />
                <Hash href="#commit">b9d4808</Hash>
                <a href="#commit">2 days ago</a>
                <CommitCount href="#commits"><GoHistory size={13} /><span><b>608</b> commits</span></CommitCount>
              </PanelHead>
              <Files>
                <tbody>
                  {files.map(([name, when, short], i) => (
                    <tr key={i}>
                      <td>{name && <GoFile size={13} />}</td>
                      <td>{name && <a href="#file">{short || name}</a>}</td>
                      <td>{name}</td>
                      <td>{when}</td>
                    </tr>
                  ))}
                </tbody>
              </Files>
            </Panel>
            <Panel>
              <PanelHead>
                <GoListUnordered size={13} />
                <PanelTitle>README.md</PanelTitle>
                <button aria-label="Edit"><GoPencil size={13} /></button>
              </PanelHead>
              <Readme>
                <Rule />
                <Title>Git</Title>
                <GitLogo />
              </Readme>
            </Panel>
          </main>
          <aside>
            <Block>
              <Heading $spread>About<GoGear size={13} /></Heading>
              <About>A directory on my Linux desktop that contains template data for various Git-based projects.</About>
              <Website href="#site"><GoLink size={13} /><span>file:///home/seanpm2001/Desktop/Git-T…</span></Website>
              <Tags>{tags.map((t) => <Tag key={t} href="#topic">{t}</Tag>)}</Tags>
              <Meta href="#readme"><GoBook size={13} />Readme</Meta>
              <Meta href="#license"><GoLaw size={13} />GPL-3.0 License</Meta>
            </Block>
            <Block>
              <Heading>Releases<Counter>2</Counter></Heading>
              <Release>
                <GoTag size={13} />
                <b>Milestone 5 version 1.0B - J…</b>
                <Latest>Latest</Latest>
                <Small>on Jan 3</Small>
              </Release>
              <BlueLink href="#releases">+ 1 release</BlueLink>
            </Block>
            <Block $pb={29}>
              <Heading $mb={16}>Sponsor this project</Heading>
              <Patron><PatreonBar /><PatreonMark /><BlueLink href="#patreon" $big>patreon.com/<b>seanpm2001_software</b></BlueLink></Patron>
            </Block>
            <Block $pb={20}>
              <Heading>Packages</Heading>
              <Small>No packages published</Small>
              <BlueLink href="#publish">Publish your first package</BlueLink>
            </Block>
            <Block $last>
              <Heading $mb={16}>Languages</Heading>
              <Bar>{langs.map(([n, v, c]) => <Part key={n} $n={v} $c={c} />)}</Bar>
              <Langs>{langs.map(([n, v, c]) => <Lang key={n} $c={c} $other={n === "Other"}><i /><b>{n}</b>{v.toFixed(1)}%</Lang>)}</Langs>
            </Block>
          </aside>
        </Columns>
      </Page>
      <ScrollTrack><ScrollThumb /></ScrollTrack>
    </Viewport>
  );
}

const StatusText = styled.div`
  position: absolute;
  left: 0;
  bottom: 0;
  height: 22px;
  padding: 0 4px;
  background: #2f2f2f;
  border: 1px solid #5a5a5a;
  border-width: 1px 1px 0 0;
  border-radius: 0 3px 0 0;
  color: #fff;
  line-height: 20px;
`;

/* ---------- extensions window ---------- */
const Window = styled.section`
  position: absolute;
  left: 109px;
  top: 76px;
  width: 802px;
  height: 549px;
  display: flex;
  flex-direction: column;
  background: #3d3d3d;
  border: 1px solid #232323;
  border-radius: 9px 9px 0 0;
  box-shadow: 0 3px 14px rgba(0, 0, 0, .5);
  color: #fff;
  overflow: hidden;
`;
const WindowHead = styled.header`
  height: 47px;
  display: grid;
  grid-template-columns: 1fr auto 1fr;
  align-items: center;
  padding: 0 13px 0 7px;
  background: #2c2c2c;
  border-bottom: 1px solid #222;
  box-shadow: inset 0 1px #3a3a3a;
`;
const WindowTitle = styled.h1`
  padding-left: 4px;
  font-size: 14px;
  line-height: 20px;
`;
const HeadGroup = styled.div`
  display: flex;
  align-items: center;
  justify-content: flex-end;
  gap: 6px;
`;
const SquareButton = styled.button`
  width: 34px;
  height: 33px;
  display: grid;
  place-items: center;
  background: #454545;
  border: 1px solid #202020;
  border-radius: 5px;
`;
const Control = styled.button`
  width: 34px;
  height: 20px;
  display: grid;
  place-items: center;
  ${(p) => p.$close && css`width: 20px; margin-left: 7px; border-radius: 50%; background: #e2491a;`}
  ${(p) => p.$first && css`margin-left: 8px;`}
`;
const Switch = styled.input.attrs({ type: "checkbox" })`
  appearance: none;
  margin: 0;
  width: 50px;
  height: 26px;
  border-radius: 13px;
  border: 1px solid #0c0c0c;
  background: #783f75;
  display: flex;
  justify-content: flex-end;
  &::before {
    content: "";
    width: 26px;
    height: 26px;
    margin: -1px;
    border-radius: 50%;
    border: 1px solid #0c0c0c;
    background: #686868;
  }
  &:not(:checked) { background: #2a2a2a; justify-content: flex-start; }
`;
const WindowBody = styled.div`
  padding: 34px 95px;
`;
const Group = styled.h2`
  font-size: 14px;
  line-height: 22px;
  margin-bottom: 9px;
`;
const ExtList = styled.ul`
  border: 1px solid #212121;
  background: #333;
`;
const ExtRow = styled.li`
  display: flex;
  align-items: center;
  gap: 12px;
  height: 63px;
  padding: 0 0 2px 14px;
  & + & { border-top: 1px solid #2b2b2b; }
  label { flex: 1; }
`;
const RoundButton = styled.button`
  width: 34px;
  height: 34px;
  display: grid;
  place-items: center;
  border-radius: 50%;
  border: 1px solid #272727;
  background: #454545;
`;
const Expand = styled.button`
  width: 63px;
  height: 34px;
  display: grid;
  place-items: center;
  border-left: 1px solid #2c2c2c;
`;
const Right = styled.i`
  border: 5px solid transparent;
  border-left-color: #fff;
  border-right: 0;
`;

function ExtensionsWindow() {
  const rows = ["Desktop Icons", "Ubuntu AppIndicators", "Ubuntu Dock"];
  return (
    <Window aria-label="Extensions">
      <WindowHead>
        <div>
          <SquareButton aria-label="About">
            <svg width="16" height="16" fill="none" stroke="#fff"><circle cx="8" cy="8" r="7.5" /><path d="M8 7v5M8 4v2" strokeWidth="2" /></svg>
          </SquareButton>
        </div>
        <WindowTitle>Extensions</WindowTitle>
        <HeadGroup>
          <Switch defaultChecked aria-label="Extensions enabled" />
          <SquareButton aria-label="Menu"><svg width="10" height="12" stroke="#fff"><path d="M0 1.5h10M0 5.5h10M0 9.5h10" /></svg></SquareButton>
          <Control $first aria-label="Minimize"><svg width="8" height="8" stroke="#fff"><path d="M0 6.5h8" /></svg></Control>
          <Control aria-label="Maximize"><svg width="8" height="8" fill="none" stroke="#fff"><path d="M.5.5h7v7h-7z" /></svg></Control>
          <Control $close aria-label="Close"><svg width="8" height="8" stroke="#fff" strokeWidth="1.3"><path d="M0 0l8 8M8 0L0 8" /></svg></Control>
        </HeadGroup>
      </WindowHead>
      <WindowBody>
        <Group>Built-In</Group>
        <ExtList>
          {rows.map((r, i) => (
            <ExtRow key={r}>
              <label htmlFor={"ext" + i}>{r}</label>
              {i === 0 && (
                <RoundButton aria-label="Preferences">
                  <svg width="18" height="18" viewBox="0 0 18 18" fill="none" stroke="#fff"><circle cx="9" cy="9" r="4" strokeWidth="1" /><circle cx="9" cy="9" r="6.2" strokeWidth="1.1" /><circle cx="9" cy="9" r="7.3" strokeWidth="1.4" strokeDasharray="2.3 2.286" /></svg>
                </RoundButton>
              )}
              <Switch id={"ext" + i} defaultChecked />
              <Expand aria-label={"Details of " + r}><Right /></Expand>
            </ExtRow>
          ))}
        </ExtList>
      </WindowBody>
    </Window>
  );
}

export default function App() {
  return (
    <Desktop>
      <Global />
      <TopBar>
        <BarGroup>
          <button>Activities</button>
          <BarButton>
            <svg width="16" height="16" viewBox="0 0 16 16" fill="#f2f2f2"><path d="M1 4h4V3a2.2 2.2 0 0 1 4 0v1h4v4h1a2.2 2.2 0 0 1 0 4h-1v4H9v-1a2 2 0 0 0-4 0v1H1v-4h1a2 2 0 0 0 0-4H1z" /></svg>
            Extensions<Triangle />
          </BarButton>
        </BarGroup>
        <Clock>Sat Apr 24  19:04:59</Clock>
        <BarGroup $end>
          <svg width="16" height="14" viewBox="0 0 16 14"><path d="M0 4q8-7 16 0l-8 9z" fill="#777" /><path d="M2.5 6q5.5-4 11 0L8 13z" fill="#fff" /><path d="M0 4q8-7 16 0" fill="none" stroke="#fff" /></svg>
          <svg width="15" height="14" viewBox="0 0 15 14" fill="#fff"><path d="M0 4h3l5-4v14l-5-4H0z" /><path d="M10 4q2 3 0 6M12 2q3.5 5 0 10" fill="none" stroke="#aaa" strokeWidth="1.2" /></svg>
          <svg width="12" height="16" viewBox="0 0 12 16"><path d="M1.5 2.5h9v13h-9zM4 1h4" fill="none" stroke="#fff" /><rect x="3" y="11" width="6" height="3" fill="#e95420" /></svg>
          <BarButton><Percent>29 %</Percent><Triangle /></BarButton>
        </BarGroup>
      </TopBar>
      <Main>
        <Dock />
        <Browser>
          <Chrome />
          <GitHubPage />
          <StatusText>https://github.com/seanpm2001/Git-Templates/blob/main/GitLogo_2000x835.png</StatusText>
        </Browser>
      </Main>
      <ExtensionsWindow />
    </Desktop>
  );
}
